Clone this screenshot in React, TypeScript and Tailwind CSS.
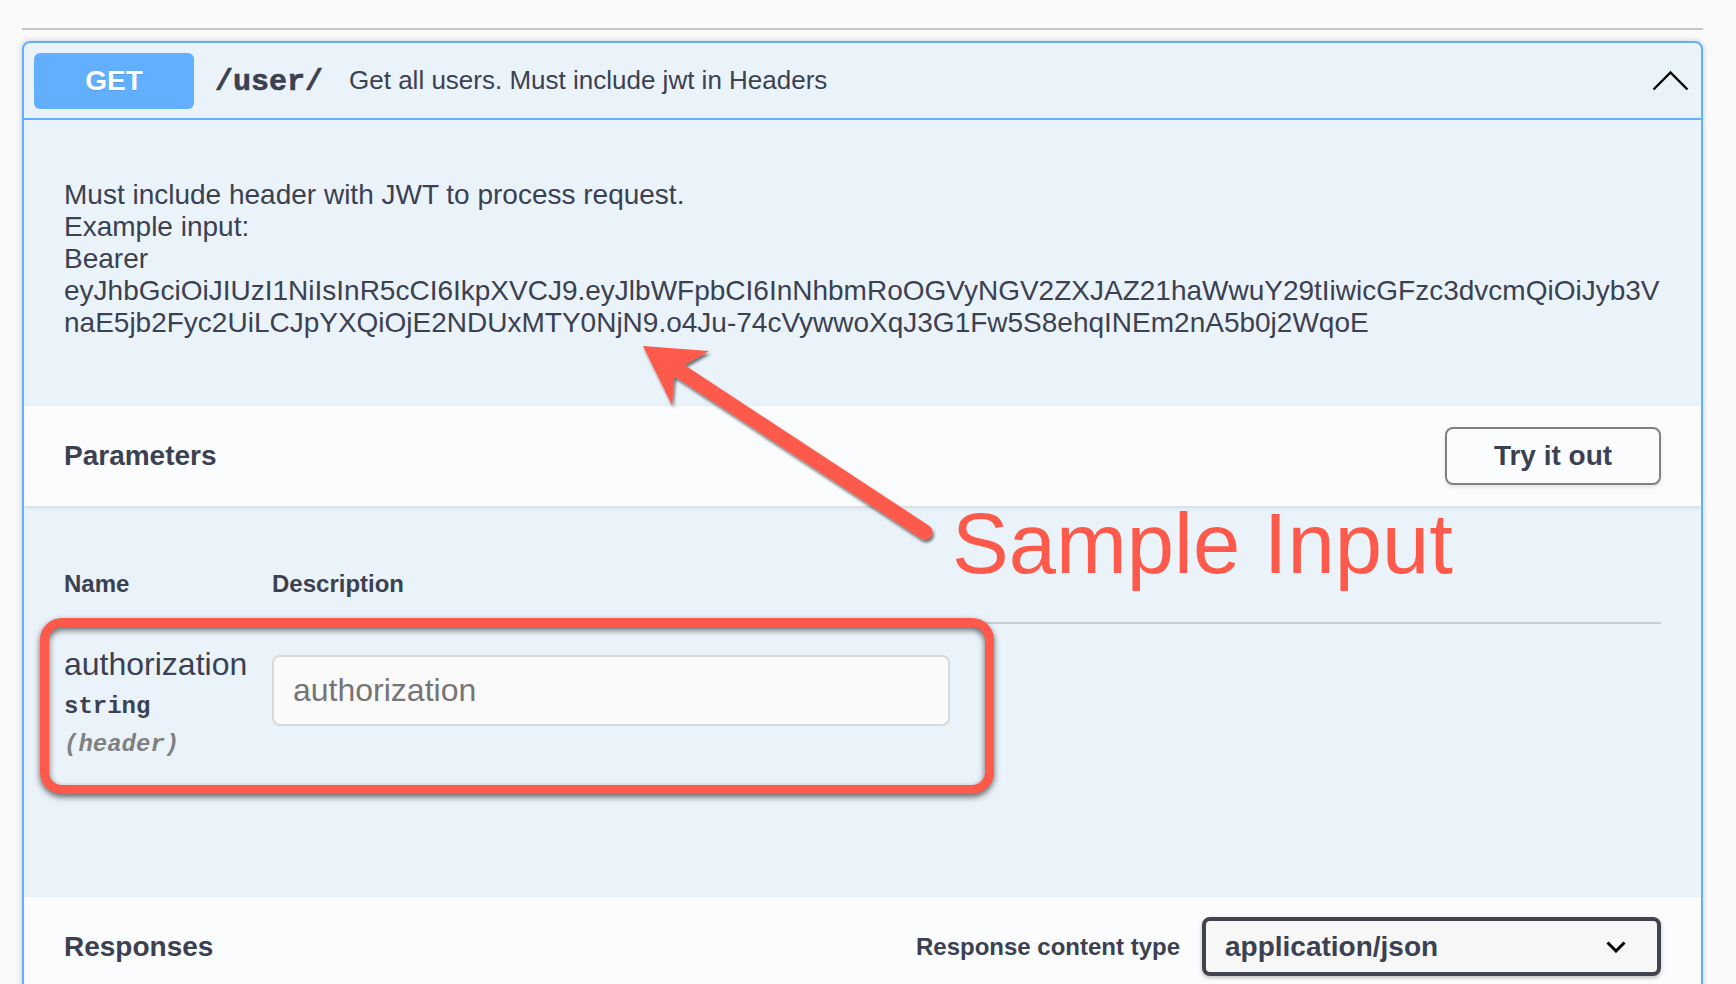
export default function App() {
  return (
    <div className="relative w-[1736px] h-[984px] overflow-hidden bg-[#fafafa] font-['Liberation_Sans',Arial,sans-serif] text-[#3b4151]">
      <div className="ml-[22px] w-[1681px] pt-[28px]">
        <div className="h-[2px] bg-[#c5c6cb]" />
        <div className="mt-[11px] overflow-hidden rounded-[8px] border-2 border-[#61affe] bg-[#ebf3fa] shadow-[0_0_6px_rgba(0,0,0,0.19)]">
          {/* summary */}
          <div className="flex h-[77px] items-center border-b-2 border-[#61affe] pl-[10px] pr-[12px]">
            <div className="flex h-[56px] w-[160px] items-center justify-center rounded-[6px] bg-[#61affe] text-[28px] font-bold text-white [text-shadow:0_1px_0_rgba(0,0,0,0.1)]">
              GET
            </div>
            <span className="ml-[21px] mt-[4px] font-['Liberation_Mono',monospace] text-[30px] font-bold [-webkit-text-stroke:0.6px_#3b4151]">/user/</span>
            <span className="ml-[26px] text-[26px]">Get all users. Must include jwt in Headers</span>
            <svg className="ml-auto" width="37" height="20" viewBox="0 0 37 20">
              <path d="M1.5 18.5 L18.5 1.5 L35.5 18.5" fill="none" stroke="#000" strokeWidth="2.4" />
            </svg>
          </div>

          {/* description */}
          <div className="pb-[67px] pl-[40px] pt-[59px] text-[28px] leading-[32px]">
            <div>Must include header with JWT to process request.</div>
            <div>Example input:</div>
            <div>Bearer</div>
            <div className="whitespace-nowrap">
              eyJhbGciOiJIUzI1NiIsInR5cCI6IkpXVCJ9.eyJlbWFpbCI6InNhbmRoOGVyNGV2ZXJAZ21haWwuY29tIiwicGFzc3dvcmQiOiJyb3V
            </div>
            <div className="whitespace-nowrap">
              naE5jb2Fyc2UiLCJpYXQiOjE2NDUxMTY0NjN9.o4Ju-74cVywwoXqJ3G1Fw5S8ehqINEm2nA5b0j2WqoE
            </div>
          </div>

          {/* parameters header */}
          <div className="relative z-10 flex h-[100px] items-center justify-between bg-[#fbfcfe] px-[40px] shadow-[0_2px_4px_rgba(0,0,0,0.1)]">
            <div className="text-[28px] font-bold">Parameters</div>
            <button className="h-[58px] w-[216px] rounded-[8px] border-2 border-[#808080] bg-transparent text-[28px] font-bold text-[#3b4151] shadow-[0_2px_4px_rgba(0,0,0,0.1)]">
              Try it out
            </button>
          </div>

          {/* parameters body */}
          <div className="h-[391px] px-[40px] pt-[40px]">
            <div className="flex border-b-2 border-[#c8cfd8] pb-[24px] pt-[24px] text-[24px] font-bold leading-[28px]">
              <div className="w-[208px]">Name</div>
              <div>Description</div>
            </div>
            <div className="flex pt-[20px]">
              <div className="w-[208px]">
                <div className="mt-[2px] text-[32px] leading-[37px]">authorization</div>
                <div className="mt-[10px] font-['Liberation_Mono',monospace] text-[24px] font-bold leading-[28px]">string</div>
                <div className="mt-[10px] font-['Liberation_Mono',monospace] text-[24px] font-bold italic leading-[28px] text-[#808080]">
                  (header)
                </div>
              </div>
              <div>
                <input
                  readOnly
                  placeholder="authorization"
                  className="mt-[11px] h-[71px] w-[678px] rounded-[8px] border-2 border-[#d9d9d9] bg-[#fafafa] px-[19px] text-[32px] outline-none placeholder:text-[#757575]"
                />
              </div>
            </div>
          </div>

          {/* responses header */}
          <div className="relative z-10 flex items-center justify-between bg-[#fbfcfe] px-[40px] py-[20px] shadow-[0_2px_4px_rgba(0,0,0,0.1)]">
            <div className="text-[28px] font-bold">Responses</div>
            <div className="flex items-center">
              <div className="mr-[22px] text-[24px] font-bold">Response content type</div>
              <div className="flex h-[59px] w-[459px] items-center justify-between rounded-[8px] border-4 border-[#41444e] bg-[#f7f7f7] pl-[19px] pr-[31px] shadow-[0_2px_4px_rgba(0,0,0,0.25)]">
                <span className="text-[28px] font-bold">application/json</span>
                <svg width="20" height="12" viewBox="0 0 20 12">
                  <path d="M1.5 1.5 L10 10 L18.5 1.5" fill="none" stroke="#000" strokeWidth="3" />
                </svg>
              </div>
            </div>
          </div>
          <div className="h-[60px] bg-[#ebf3fa]" />
        </div>
      </div>

      {/* annotations overlay */}
      <div className="pointer-events-none absolute inset-0 z-20">
        <div className="absolute left-[40px] top-[618px] h-[176px] w-[954px] rounded-[22px] border-[9px] border-[#fe5a4b] [filter:drop-shadow(0_3px_3px_rgba(0,0,0,0.6))]" />
        <div className="absolute left-[952px] top-[501px] whitespace-nowrap text-[85px] leading-[86px] text-[#fe5a4b]">
          Sample Input
        </div>
        <svg className="absolute left-0 top-0" width="1736" height="984" viewBox="0 0 1736 984">
          <defs>
            <filter id="sh" x="-20%" y="-20%" width="140%" height="140%">
              <feDropShadow dx="1.5" dy="3" stdDeviation="1.8" floodColor="#000" floodOpacity="0.55" />
            </filter>
          </defs>
          <g filter="url(#sh)" fill="#fe5a4b">
            <line x1="680" y1="371" x2="925" y2="532" stroke="#fe5a4b" strokeWidth="15" strokeLinecap="round" />
            <polygon points="643,346 709,351 686,364 674,379 672,405" />
          </g>
        </svg>
      </div>
    </div>
  );
}
